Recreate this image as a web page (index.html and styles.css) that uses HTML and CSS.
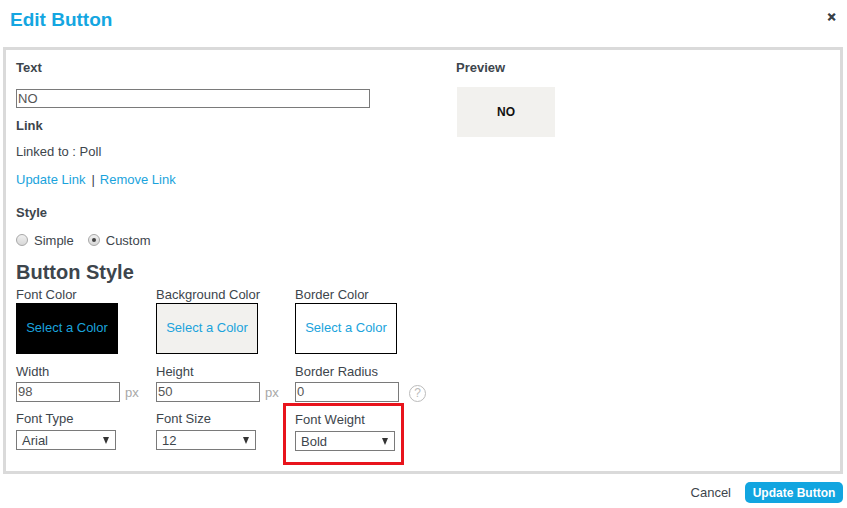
FILE: index.html
```html
<!DOCTYPE html>
<html>
<head>
<meta charset="utf-8">
<link rel="stylesheet" href="styles.css">
</head>
<body>
<div class="dialog">
  <header class="head">
    <h1 class="title">Edit Button</h1>
    <span class="close">&#x2715;</span>
  </header>
  <div class="panel">
    <div class="left">
      <div class="label label-text">Text</div>
      <div class="text-input">NO</div>
      <div class="label label-link">Link</div>
      <div class="plain linked">Linked to : Poll</div>
      <div class="links"><a class="lnk">Update Link</a><span class="sep">|</span><a class="lnk">Remove Link</a></div>
      <div class="label label-style">Style</div>
      <div class="radios">
        <span class="radio"></span><span class="rlabel">Simple</span>
        <span class="radio checked"></span><span class="rlabel">Custom</span>
      </div>
      <h2 class="bstyle">Button Style</h2>
      <div class="grid">
        <div class="cell">
          <div class="flabel">Font Color</div>
          <div class="swatch sw-black">Select a Color</div>
        </div>
        <div class="cell">
          <div class="flabel">Background Color</div>
          <div class="swatch sw-beige">Select a Color</div>
        </div>
        <div class="cell">
          <div class="flabel">Border Color</div>
          <div class="swatch sw-white">Select a Color</div>
        </div>

        <div class="cell row2">
          <div class="flabel">Width</div>
          <div class="inrow"><span class="num">98</span><span class="unit">px</span></div>
        </div>
        <div class="cell row2">
          <div class="flabel">Height</div>
          <div class="inrow"><span class="num">50</span><span class="unit">px</span></div>
        </div>
        <div class="cell row2">
          <div class="flabel">Border Radius</div>
          <div class="inrow"><span class="num">0</span><span class="help">?</span></div>
        </div>

        <div class="cell row3">
          <div class="flabel">Font Type</div>
          <div class="select"><span>Arial</span><span class="arrow"></span></div>
        </div>
        <div class="cell row3">
          <div class="flabel">Font Size</div>
          <div class="select"><span>12</span><span class="arrow"></span></div>
        </div>
        <div class="cell row3 marked">
          <div class="flabel">Font Weight</div>
          <div class="select"><span>Bold</span><span class="arrow"></span></div>
        </div>
      </div>
    </div>
    <div class="right">
      <div class="label label-text">Preview</div>
      <div class="preview">NO</div>
    </div>
  </div>
  <footer class="foot">
    <span class="cancel">Cancel</span>
    <span class="update">Update Button</span>
  </footer>
</div>
</body>
</html>
```

FILE: styles.css
```css
*, *::before, *::after { box-sizing: border-box; }
html, body { margin: 0; padding: 0; background: #fff; }
body {
  font-family: "Liberation Sans", Arial, sans-serif;
  font-size: 13px;
  color: #3d454c;
}
.dialog { width: 847px; height: 508px; }

.head {
  height: 47px;
  display: flex;
  align-items: flex-start;
  justify-content: space-between;
  padding: 8px 10px 0 10px;
}
.title {
  margin: 0;
  font-size: 19px;
  line-height: 24px;
  font-weight: bold;
  color: #14a6e1;
}
.close {
  font-size: 11px;
  font-weight: bold;
  color: #3a4148;
  margin-top: 3px;
  margin-right: 1px;
  -webkit-text-stroke: 0.6px #3a4148;
}

.panel {
  margin: 0 4px 0 3px;
  height: 427px;
  border: 3px solid #dadada;
  display: flex;
  padding: 10px 0 0 10px;
}
.left { width: 440px; display: flex; flex-direction: column; align-items: flex-start; }
.right { display: flex; flex-direction: column; }

.label { font-weight: bold; line-height: 16px; color: #3d454c; }
.label-link { margin-top: 10px; }
.label-style { margin-top: 17px; }

.text-input {
  margin-top: 13px;
  width: 354px;
  height: 19px;
  border: 1px solid #7a7a7a;
  color: #555;
  line-height: 17px;
  padding-left: 1px;
}
.plain { line-height: 16px; }
.linked { margin-top: 10px; }
.links { margin-top: 12px; line-height: 16px; display: flex; align-items: center; }
.lnk { color: #1aa3dc; }
.sep { color: #3d454c; margin: 0 5px 0 6px; }

.radios { margin-top: 12px; display: flex; align-items: center; line-height: 16px; }
.radio {
  width: 12px; height: 12px;
  border-radius: 50%;
  border: 1px solid #a8a8a8;
  background: linear-gradient(#f0f0f0, #d8d8d8);
  display: inline-flex;
  align-items: center;
  justify-content: center;
  margin-top: -2px;
}
.radio.checked::after {
  content: "";
  width: 4px; height: 4px;
  border-radius: 50%;
  background: #444;
}
.rlabel { margin-left: 6px; margin-right: 14px; }

.bstyle {
  margin: 11px 0 0 0;
  font-size: 20px;
  line-height: 24px;
  font-weight: bold;
  color: #3d454c;
}

.grid {
  display: grid;
  grid-template-columns: 140px 139px 140px;
  row-gap: 10px;
  margin-top: 3px;
}
.cell { display: flex; flex-direction: column; align-items: flex-start; }
.flabel { line-height: 16px; color: #3d454c; }
.row2 { margin-top: 0; }
.row3 { margin-top: -1px; }
.marked { position: relative; top: 1px; }
.marked::before {
  content: "";
  position: absolute;
  left: -12px; top: -9px;
  width: 121px; height: 62px;
  border: 3px solid #e8141c;
}

.swatch {
  width: 102px; height: 51px;
  display: flex; align-items: center; justify-content: center;
  color: #1aa3dc;
  padding-bottom: 3px;
}
.sw-black { background: #000; }
.sw-beige { background: #f2f1ee; border: 1px solid #000; }
.sw-white { background: #fff; border: 1px solid #000; }

.inrow { display: flex; align-items: center; margin-top: 2px; }
.num {
  width: 104px; height: 20px;
  border: 1px solid #7a7a7a;
  line-height: 18px;
  padding-left: 1px;
  color: #555;
}
.unit { color: #a8a8a8; margin-left: 5px; }
.help {
  width: 17px; height: 17px;
  margin-left: 10px;
  margin-top: 2px;
  border: 1px solid #bbb;
  border-radius: 50%;
  color: #bbb;
  font-size: 12px;
  display: flex; align-items: center; justify-content: center;
}

.select {
  margin-top: 3px;
  width: 100px; height: 20px;
  border: 1px solid #7a7a7a;
  display: flex; align-items: center; justify-content: space-between;
  padding: 0 6px 0 5px;
  color: #3d454c;
}
.arrow {
  width: 0; height: 0;
  border-left: 3.5px solid transparent;
  border-right: 3.5px solid transparent;
  border-top: 7px solid #333;
}

.preview {
  margin-top: 11px;
  margin-left: 1px;
  width: 98px; height: 50px;
  background: #f2f1ee;
  display: flex; align-items: center; justify-content: center;
  font-size: 12px; font-weight: bold; color: #111;
}

.foot {
  display: flex;
  justify-content: flex-end;
  align-items: center;
  padding: 8px 4px 0 0;
}
.cancel { color: #3d454c; margin-right: 14px; }
.update {
  width: 98px; height: 21px;
  background: #11a5e0;
  border-radius: 5px;
  color: #fff;
  font-size: 12px;
  font-weight: bold;
  display: flex; align-items: center; justify-content: center;
}
```
